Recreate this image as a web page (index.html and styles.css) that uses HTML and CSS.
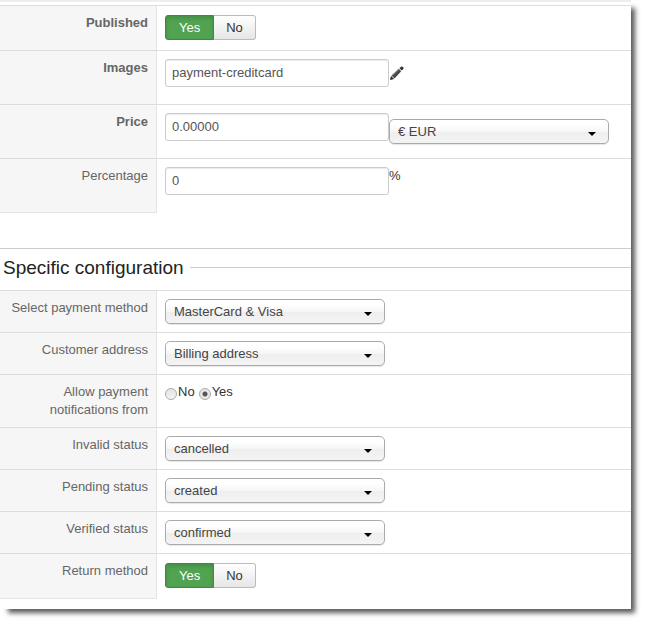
FILE: index.html
```html
<!DOCTYPE html>
<html lang="en">
<head>
<meta charset="utf-8">
<title>Payment method</title>
<link rel="stylesheet" href="styles.css">
</head>
<body>
<form class="panel">
  <section class="group">
    <div class="row">
      <div class="label strong" id="published">Published</div>
      <div class="field">
        <div class="toggle" role="group" aria-labelledby="published">
          <button type="button" class="toggle-btn active" aria-pressed="true">Yes</button>
          <button type="button" class="toggle-btn" aria-pressed="false">No</button>
        </div>
      </div>
    </div>
    <div class="row">
      <label class="label strong" for="images">Images</label>
      <div class="field tall">
        <input class="text" type="text" id="images" value="payment-creditcard">
        <button type="button" class="edit" aria-label="Edit">
          <svg viewBox="0 0 14 14" width="14" height="14" aria-hidden="true">
            <path d="M0 14 1 10 4 13Z" fill="#222"/>
            <path d="M1.500 9.500 8.700 2.800 11.200 5.300 4.500 12.500Z" fill="#484848"/>
            <path d="M2.500 9.500 9 3.500" stroke="#888" stroke-width="1"/>
            <path d="M9.400 2.200 11 .700Q12 0 13 1T13.300 3L11.800 4.600Z" fill="#333"/>
          </svg>
        </button>
      </div>
    </div>
    <div class="row">
      <label class="label strong" for="price">Price</label>
      <div class="field tall">
        <input class="text" type="text" id="price" value="0.00000">
        <div class="select lowered">
          <select aria-label="Currency"><option>€ EUR</option></select>
        </div>
      </div>
    </div>
    <div class="row">
      <label class="label" for="percentage">Percentage</label>
      <div class="field tall">
        <input class="text" type="text" id="percentage" value="0">
        <span class="unit">%</span>
      </div>
    </div>
  </section>

  <section class="group specific">
    <h2 class="heading">Specific configuration</h2>
    <div class="row">
      <label class="label" for="method">Select payment method</label>
      <div class="field">
        <div class="select"><select id="method"><option>MasterCard &amp; Visa</option></select></div>
      </div>
    </div>
    <div class="row">
      <label class="label" for="address">Customer address</label>
      <div class="field">
        <div class="select"><select id="address"><option>Billing address</option></select></div>
      </div>
    </div>
    <div class="row">
      <div class="label" id="notify">Allow payment notifications from</div>
      <div class="field radios" role="radiogroup" aria-labelledby="notify">
        <label class="choice"><input type="radio" name="notify">No</label>
        <label class="choice"><input type="radio" name="notify" checked>Yes</label>
      </div>
    </div>
    <div class="row">
      <label class="label" for="invalid">Invalid status</label>
      <div class="field">
        <div class="select"><select id="invalid"><option>cancelled</option></select></div>
      </div>
    </div>
    <div class="row">
      <label class="label" for="pending">Pending status</label>
      <div class="field">
        <div class="select"><select id="pending"><option>created</option></select></div>
      </div>
    </div>
    <div class="row">
      <label class="label" for="verified">Verified status</label>
      <div class="field">
        <div class="select"><select id="verified"><option>confirmed</option></select></div>
      </div>
    </div>
    <div class="row">
      <div class="label" id="return">Return method</div>
      <div class="field">
        <div class="toggle" role="group" aria-labelledby="return">
          <button type="button" class="toggle-btn active" aria-pressed="true">Yes</button>
          <button type="button" class="toggle-btn" aria-pressed="false">No</button>
        </div>
      </div>
    </div>
  </section>
</form>
</body>
</html>
```
FILE: styles.css
```css
* {
  box-sizing: border-box;
}

body {
  margin: 0;
  padding: 0 15px 15px 0;
  background: #fff;
  color: #333;
  font: 13px/18px "Liberation Sans", Arial, sans-serif;
}

.panel {
  padding: 3px 0 10px;
  border-top: 2px solid #eee;
  background: #fff;
  box-shadow: 6px 6px 5px -2px rgba(0, 0, 0, 0.65);
}

.row {
  display: grid;
  grid-template-columns: 157px 1fr;
  border-top: 1px solid #ddd;
}

.label {
  padding: 8px;
  border-right: 1px solid #e5e5e5;
  background: #f6f6f6;
  color: #666;
  text-align: right;
}

.row:last-child .label {
  border-bottom: 1px solid #e5e5e5;
}

.strong {
  font-weight: bold;
}

.field {
  display: flex;
  align-items: flex-start;
  padding: 8px;
}

.row:last-child .field {
  margin-bottom: 1px;
}

.tall {
  min-height: 53px;
}

.text {
  width: 224px;
  height: 28px;
  padding: 0 6px 2px;
  border: 1px solid #ccc;
  border-radius: 3px;
  background: #fff;
  box-shadow: inset 0 1px 1px rgba(0, 0, 0, 0.08);
  color: #555;
  font: inherit;
}

.edit {
  display: flex;
  margin-top: 7px;
  padding: 0 1px;
  border: 0;
  background: none;
}

.select {
  position: relative;
  width: 220px;
}

.select select {
  display: block;
  width: 100%;
  height: 25px;
  padding: 0 24px 0 8px;
  border: 1px solid #aaa;
  border-radius: 5px;
  appearance: none;
  background: linear-gradient(#fff 20%, #f6f6f6 50%, #eee 52%, #f4f4f4 100%);
  box-shadow: 0 1px 1px rgba(0, 0, 0, 0.1);
  color: #444;
  font: inherit;
}

.select::after {
  content: "";
  position: absolute;
  top: 13px;
  right: 13px;
  border: 4px solid transparent;
  border-top-color: #000;
  border-bottom: 0;
  pointer-events: none;
}

.lowered {
  margin-top: 6px;
}

.toggle {
  display: flex;
  margin: 1px 0 2px;
}

.toggle-btn {
  height: 25px;
  padding: 0 12px;
  border: 1px solid #bbb;
  border-left: 0;
  border-radius: 0 3px 3px 0;
  background: linear-gradient(#fff, #e6e6e6);
  color: #333;
  font: inherit;
}

.toggle-btn.active {
  padding: 0 13px;
  border: 1px solid #3d8b3d;
  border-radius: 3px 0 0 3px;
  background: #51a351;
  box-shadow: inset 0 2px 4px rgba(0, 0, 0, 0.15);
  color: #fff;
}

.radios {
  gap: 4px;
}

.choice {
  display: flex;
}

.choice input {
  width: 12px;
  height: 12px;
  margin: 5px 1px 0 0;
  border: 1px solid #aaa;
  border-radius: 50%;
  appearance: none;
  background: linear-gradient(#e4e4e4, #f4f4f4);
}

.choice input:checked {
  background: radial-gradient(circle, #555 0 2px, #e8e8e8 3px);
}

.specific {
  margin-top: 35px;
  border-top: 1px solid #ccc;
}

.heading {
  display: flex;
  align-items: center;
  gap: 6px;
  margin: 0 0 4px;
  padding-left: 3px;
  color: #222;
  font-size: 19px;
  font-weight: normal;
  line-height: 37px;
}

.heading::after {
  content: "";
  flex: 1;
  height: 1px;
  background: #ccc;
}
```
